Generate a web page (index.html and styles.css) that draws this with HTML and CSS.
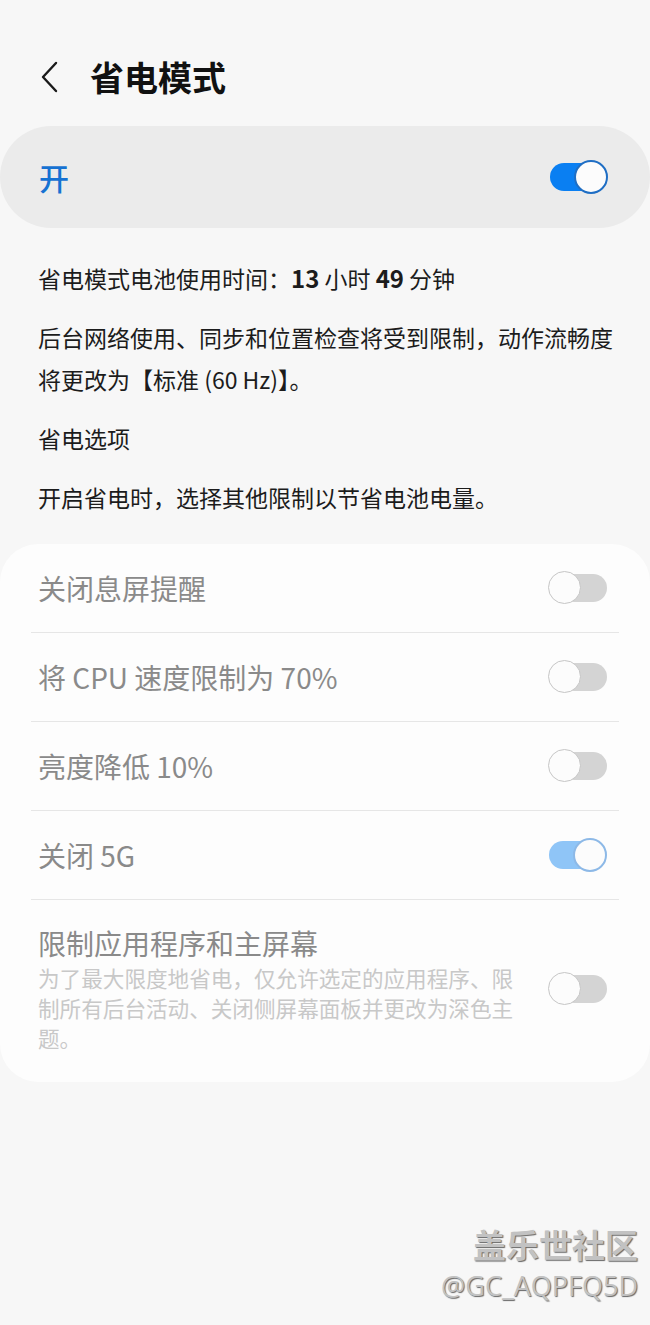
FILE: index.html
```html
<!DOCTYPE html>
<html>
  <head>
    <title>省电模式</title>
    <link rel="stylesheet" href="styles.css">
  </head>
  <body>
    <header class="topbar">
      <svg class="back" width="20" height="32" viewBox="0 0 20 32">
        <polyline points="16,2 3,16 16,30" fill="none" stroke="#1a1a1a" stroke-width="2.4" stroke-linecap="round" stroke-linejoin="round"/>
      </svg>
      <h1>省电模式</h1>
    </header>

    <section class="master">
      <span class="master-label">开</span>
      <span class="switch on"></span>
    </section>

    <section class="info">
      <p>省电模式电池使用时间：<b>13</b> 小时 <b>49</b> 分钟</p>
      <p>后台网络使用、同步和位置检查将受到限制，动作流畅度将更改为【标准 (60 Hz)】。</p>
      <p>省电选项</p>
      <p>开启省电时，选择其他限制以节省电池电量。</p>
    </section>

    <section class="options">
      <div class="row">
        <span class="row-title">关闭息屏提醒</span>
        <span class="switch"></span>
      </div>
      <div class="row">
        <span class="row-title">将 CPU 速度限制为 70%</span>
        <span class="switch"></span>
      </div>
      <div class="row">
        <span class="row-title">亮度降低 10%</span>
        <span class="switch"></span>
      </div>
      <div class="row">
        <span class="row-title">关闭 5G</span>
        <span class="switch on dim"></span>
      </div>
      <div class="row tall">
        <div class="row-text">
          <div class="row-title">限制应用程序和主屏幕</div>
          <div class="row-desc">为了最大限度地省电，仅允许选定的应用程序、限制所有后台活动、关闭侧屏幕面板并更改为深色主题。</div>
        </div>
        <span class="switch"></span>
      </div>
    </section>

    <div class="watermark">
      <div class="wm-name">盖乐世社区</div>
      <div class="wm-id">@GC_AQPFQ5D</div>
    </div>
  </body>
</html>
```

FILE: styles.css
```css
body{
  margin:0;
  width:650px;
  min-height:1325px;
  background:#f7f7f7;
  font-family:"Noto Sans CJK SC", "Noto Sans", sans-serif;
  color:#1c1c1c;
  position:relative;
}
.topbar{
  display:flex;
  align-items:center;
  padding:52px 0 0 40px;
  height:50px;
}
.back{
  margin-right:30px;
}
h1{
  margin:0;
  font-size:34px;
  font-weight:bold;
  line-height:50px;
  color:#111;
}
.master{
  margin-top:24px;
  height:102px;
  border-radius:51px;
  background:#ebebeb;
  display:flex;
  align-items:center;
  justify-content:space-between;
  padding:0 42px 0 39px;
}
.master-label{
  font-size:30px;
  font-weight:500;
  color:#1672d2;
}

/* switches */
.switch{
  position:relative;
  display:block;
  width:59px;
  height:34px;
  flex:none;
}
.switch::before{
  content:"";
  position:absolute;
  left:12px;
  right:0;
  top:3px;
  bottom:3px;
  border-radius:15px;
  background:#d4d4d4;
}
.switch::after{
  content:"";
  position:absolute;
  left:0;
  top:0;
  width:31px;
  height:31px;
  border-radius:50%;
  background:#fcfcfc;
  border:1.5px solid #c6c6c6;
}
.switch.on::before{
  left:1px;
  right:8px;
  background:#0a7ff2;
}
.switch.on::after{
  left:auto;
  right:0;
  width:30px;
  height:30px;
  border:2px solid #1f6ec4;
}
.switch.dim::before{
  background:#8fc5f7;
}
.switch.dim::after{
  border-color:#8db9e7;
}

.info{
  padding:29px 30px 0 38px;
}
.info p{
  margin:0 0 17px;
  font-size:23px;
  line-height:42px;
}
.info b{
  font-weight:bold;
  font-size:24px;
}

.options{
  margin-top:26px;
  background:#fdfdfd;
  border-radius:38px;
  padding:0 31px;
}
.row{
  display:flex;
  align-items:center;
  justify-content:space-between;
  height:88px;
  padding:0 12px 0 7px;
  border-bottom:1px solid #e6e6e6;
}
.row.tall{
  height:auto;
  padding-top:25px;
  padding-bottom:29px;
  border-bottom:none;
}
.row-title{
  font-size:28px;
  line-height:36px;
  color:#8a8a8a;
}
.row-desc{
  width:480px;
  margin-top:2px;
  font-size:21.6px;
  line-height:30px;
  color:#c8c8c8;
}

.watermark{
  position:absolute;
  right:12px;
  top:1222px;
  text-align:right;
  color:#c2c2c2;
  text-shadow:1px 1px 1px #666;
}
.wm-name{
  font-size:33px;
  font-weight:bold;
  line-height:44px;
}
.wm-id{
  font-family:"Open Sans", sans-serif;
  font-size:27px;
  line-height:40px;
}
```
